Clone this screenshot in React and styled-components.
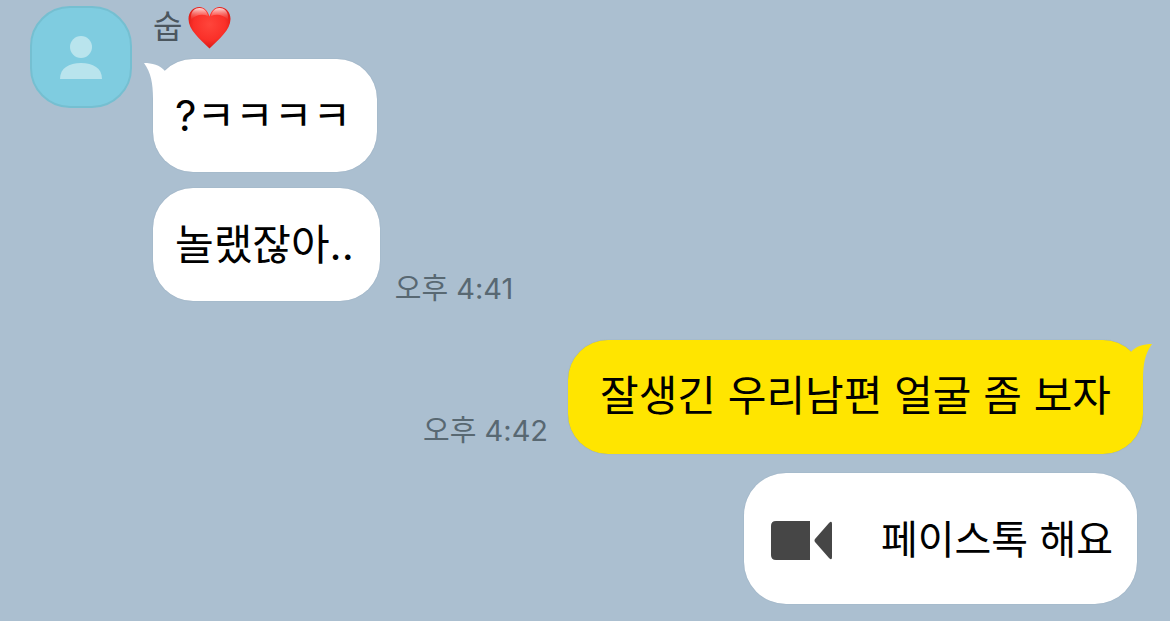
import React from "react";
import styled, { createGlobalStyle } from "styled-components";

const GlobalStyle = createGlobalStyle`
  *, *::before, *::after { box-sizing: border-box; }
  body {
    margin: 0;
    background: #abbfd0;
    color: #000;
    font-family: Inter, "Noto Sans CJK KR", sans-serif;
  }
`;

const Chat = styled.main`
  display: flex;
  flex-direction: column;
  gap: 39px;
  padding: 6px 27px 17px 30px;
`;

const Incoming = styled.section`
  display: flex;
  align-items: flex-start;
  gap: 21px;
`;

const Outgoing = styled.section`
  display: flex;
  flex-direction: column;
  align-items: flex-end;
  gap: 19px;
`;

const Avatar = styled.div`
  flex: none;
  display: flex;
  width: 102px;
  height: 102px;
  border: 2px solid #75bfd1;
  border-radius: 40px;
  background: #7fcce0;
`;

const Thread = styled.div`
  display: flex;
  flex-direction: column;
  align-items: flex-start;
  gap: 16px;
`;

const Sender = styled.h2`
  display: flex;
  align-items: center;
  gap: 6px;
  height: 42px;
  margin: 0 0 -5px;
  color: #4b565e;
  font-size: 32px;
  font-weight: 400;
  line-height: 44px;
`;

const MessageRow = styled.div`
  display: flex;
  align-items: flex-end;
  gap: ${(p) => (p.$mine ? 20 : 15)}px;
`;

const Bubble = styled.p`
  position: relative;
  margin: 0;
  padding: ${(p) => (p.$mine ? "28px 32px 30px 32px" : "29px 26px 28px 22px")};
  border-radius: 40px;
  background: ${(p) => (p.$mine ? "#ffe500" : "#fff")};
  box-shadow: 0 0 1px rgba(70, 100, 130, 0.4);
  font-size: 42px;
  line-height: 56px;
  white-space: nowrap;
`;

const Tail = styled.svg`
  position: absolute;
  top: 4px;
  ${(p) => (p.$mine ? "right: -9px; transform: scaleX(-1);" : "left: -9px;")}
  width: 24px;
  height: 36px;
`;

const Time = styled.time`
  margin-bottom: ${(p) => (p.$mine ? 3 : -8)}px;
  color: #586872;
  font-size: 29px;
  line-height: 40px;
  white-space: nowrap;
`;

const CallCard = styled.button`
  display: flex;
  align-items: center;
  gap: 49px;
  margin-right: 6px;
  height: 131px;
  padding: 3px 24px 0 27px;
  border: 0;
  border-radius: 42px;
  background: #fff;
  box-shadow: 0 0 1px rgba(70, 100, 130, 0.4);
  color: #000;
  font: inherit;
  font-size: 40px;
  line-height: 56px;
  white-space: nowrap;
`;

function BubbleTail({ mine }) {
  return (
    <Tail $mine={mine} viewBox="0 0 24 36" aria-hidden="true">
      <path
        d="M0 0C8 0 16 2 21 8L24 10V36H9C9 20 7 10 0 0Z"
        fill={mine ? "#ffe500" : "#fff"}
      />
    </Tail>
  );
}

function Heart() {
  return (
    <svg width="43" height="43" viewBox="0 0 43 43" role="img" aria-label="하트">
      <defs>
        <radialGradient id="heartBody" cx="0.5" cy="0.42" r="0.58">
          <stop offset="0" stopColor="#ff453b" />
          <stop offset="0.65" stopColor="#fa3029" />
          <stop offset="1" stopColor="#da1813" />
        </radialGradient>
        <linearGradient id="heartShine" x1="0" y1="0" x2="0" y2="1">
          <stop offset="0" stopColor="#fff" stopOpacity="0.85" />
          <stop offset="1" stopColor="#ff8a80" stopOpacity="0" />
        </linearGradient>
      </defs>
      <path
        d="M21.500 10.500C23 5 27 1 31.500 1C38 1 42.500 6 42.500 13C42.500 24 31 33 21.500 42.500C12 33 .5 24 .5 13C.5 6 5 1 11.500 1C16 1 20 5 21.500 10.500Z"
        fill="url(#heartBody)"
      />
      <path d="M3 11C3 5 7 2 11.500 2C16 2 19 5 20 10C15 8 8 8 3 14Z" fill="url(#heartShine)" />
      <path d="M40 11C40 5 36 2 31.500 2C27 2 24 5 23 10C28 8 35 8 40 14Z" fill="url(#heartShine)" />
    </svg>
  );
}

export default function App() {
  return (
    <>
      <GlobalStyle />
      <Chat>
        <Incoming>
          <Avatar>
            <svg width="98" height="98" viewBox="0 0 98 98" fill="#b9e4ed" aria-hidden="true">
              <circle cx="49" cy="39" r="11" />
              <path d="M28 71C28 60 37 55 49 55S70 60 70 71Z" />
            </svg>
          </Avatar>
          <Thread>
            <Sender>
              숩
              <Heart />
            </Sender>
            <Bubble>
              <BubbleTail />
              ?ㅋㅋㅋㅋ
            </Bubble>
            <MessageRow>
              <Bubble>놀랬잖아..</Bubble>
              <Time>오후 4:41</Time>
            </MessageRow>
          </Thread>
        </Incoming>
        <Outgoing>
          <MessageRow $mine>
            <Time $mine>오후 4:42</Time>
            <Bubble $mine>
              <BubbleTail mine />
              잘생긴 우리남편 얼굴 좀 보자
            </Bubble>
          </MessageRow>
          <CallCard type="button">
            <svg width="61" height="39" viewBox="0 0 61 39" fill="#464646" aria-hidden="true">
              <path d="M5 0H39V39H5Q0 39 0 34V5Q0 0 5 0Z" />
              <path d="M44 18L58 2Q61 -1 61 3V36Q61 40 58 37L44 21Q43 19.500 44 18Z" />
            </svg>
            페이스톡 해요
          </CallCard>
        </Outgoing>
      </Chat>
    </>
  );
}
